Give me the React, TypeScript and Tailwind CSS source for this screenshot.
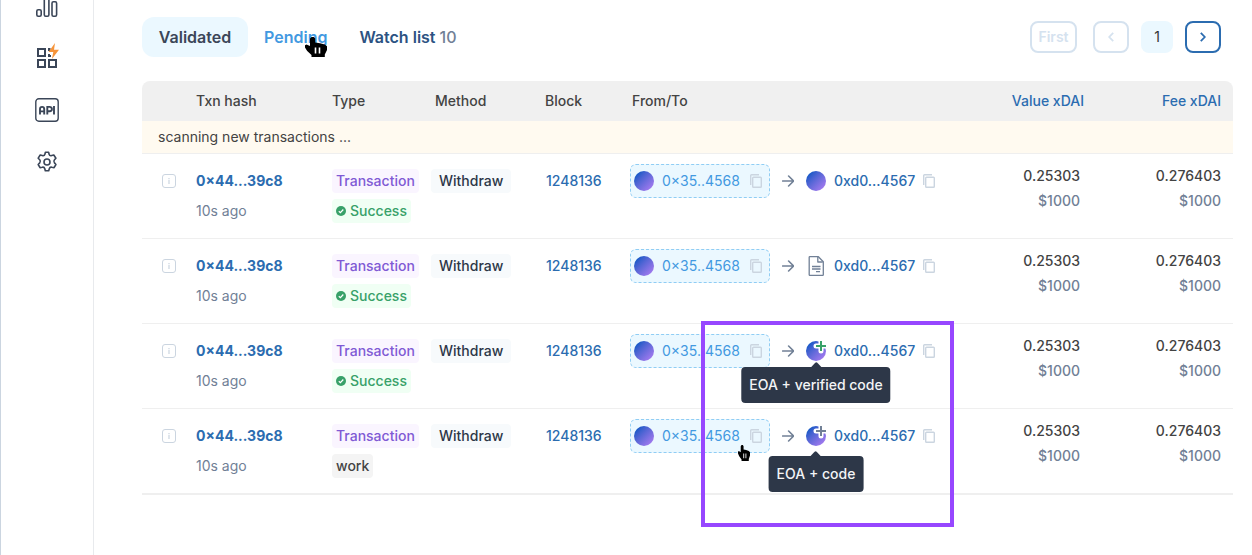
import React from "react";
import clsx from "clsx";

interface Txn {
    id: number;
    status: "success" | "work";
    target: "eoa" | "contract" | "verified" | "code";
    tooltip?: string;
}

const txns: Txn[] = [
    { id: 1, status: "success", target: "eoa" },
    { id: 2, status: "success", target: "contract" },
    { id: 3, status: "success", target: "verified", tooltip: "EOA + verified code" },
    { id: 4, status: "work", target: "code", tooltip: "EOA + code" },
];

function StatsIcon() {
    return (
        <svg width="24" height="18" viewBox="0 0 24 18" fill="none" stroke="#3b4658" strokeWidth="1.6">
            <rect x="1.8" y="9.8" width="4.4" height="6.4" rx="1.4" />
            <rect x="9.3" y="-4" width="4.6" height="20.2" rx="1.4" />
            <rect x="17" y="1.8" width="4.6" height="14.4" rx="1.4" />
        </svg>
    );
}

function AppsIcon() {
    return (
        <svg width="24" height="27" viewBox="0 0 24 27" fill="none">
            <g stroke="#3b4658" strokeWidth="2">
                <rect x="3" y="7" width="7" height="7" />
                <rect x="3" y="18" width="7" height="7" />
                <rect x="14" y="18" width="7" height="7" />
                <path d="M15.5 7H14v2M14 12v2h2" />
            </g>
            <path d="M20 1l-6.5 9h4.8l-1.4 7L24 7.8h-5z" fill="#f6943a" />
        </svg>
    );
}

function ApiIcon() {
    return (
        <svg width="24" height="24" viewBox="0 0 24 24" fill="none" stroke="#3b4658">
            <rect x="0.8" y="0.8" width="22.4" height="22.4" rx="3" strokeWidth="1.4" />
            <path d="M5 16.5V11a2.1 2.1 0 0 1 4.2 0v5.5M5 13.4h4.2M12.3 16.5V8.9h2.4a2.1 2.1 0 0 1 0 4.4h-2.4M19 8v8.5" strokeWidth="1.9" />
        </svg>
    );
}

function GearIcon() {
    return (
        <svg width="24" height="24" viewBox="0 0 24 24" fill="none" stroke="#3b4658" strokeWidth="1.6" strokeLinejoin="round">
            <circle cx="12" cy="12" r="3" />
            <path d="M9.9 4.2 10.4 2.2h3.2l.5 2c.3 1.1 1.5 1.7 2.6 1.4l2.1-.6 2.1 3.2-1.4 1.6c-.8.9-.8 2.2 0 3.1l1.4 1.6-1.8 3.2-2.2-.5c-1.1-.3-2.3.4-2.6 1.5l-.6 2.1h-3.4l-.5-2.1c-.3-1.1-1.5-1.8-2.6-1.5l-2.2.5-1.8-3.2 1.5-1.6c.8-.9.8-2.2 0-3.1L3.2 8.2 5.2 5l2.1.6c1.1.3 2.3-.3 2.6-1.4z" />
        </svg>
    );
}

function CopyIcon() {
    return (
        <svg width="12" height="14" viewBox="0 0 12 14" fill="none" stroke="#cbd5e0" strokeWidth="1.4">
            <rect x="2.7" y="3.2" width="8.6" height="10.1" rx="0.8" />
            <path d="M0.7 11V1.5a.8.8 0 0 1 .8-.8H9" />
        </svg>
    );
}

function ArrowIcon() {
    return (
        <svg className="mx-3 shrink-0" width="12" height="12" viewBox="0 0 12 12" fill="none" stroke="#718096" strokeWidth="1.6" strokeLinecap="round" strokeLinejoin="round">
            <path d="M.6 6h10.8M6.6 1l5 5-5 5" />
        </svg>
    );
}

function ContractIcon() {
    return (
        <svg width="20" height="20" viewBox="0 0 20 20" fill="none" stroke="#718096" strokeWidth="1.3" strokeLinejoin="round">
            <path d="M3.8.7h8.6l4.9 5v13a.7.7 0 0 1-.7.7H3.9a.7.7 0 0 1-.7-.7V1.3a.6.6 0 0 1 .6-.6z" />
            <path d="M11.8 1v5h5M6 10.5h8.5M6 13h8.5M10 15.6h4" />
        </svg>
    );
}

function Avatar({ plus }: { plus?: string }) {
    return (
        <span className="relative block size-5">
            <span className="block size-5 rounded-full bg-linear-135 from-[#1259c7] from-15% to-[#a57af0] to-90%" />
            {plus && (
                <svg className="absolute top-0 left-0" width="20" height="20" viewBox="0 0 20 20" fill="none">
                    <path d="M15 0v10M10 5h10" stroke="#fff" strokeWidth="5" strokeLinecap="round" />
                    <path d="M15 0v10M10 5h10" stroke={plus} strokeWidth="2" />
                </svg>
            )}
        </span>
    );
}

function HandCursor({ className }: { className: string }) {
    return (
        <svg className={clsx("pointer-events-none absolute z-20", className)} viewBox="0 0 22 20" preserveAspectRatio="none">
            <path d="M6.5 0h2.4l1.3 1.5v4l4.8.7 4.8 1.3 2.2 1.7v3.8l-2.2 4.5V20H6.5v-2L2.2 14 0 10.5V8.3l1.5-.8 3.5 1.5V1.5z" />
            <path d="M10.5 10.5v6M14.5 10.5v6" stroke="#fff" strokeWidth="1.6" />
        </svg>
    );
}

function TargetIcon({ txn }: { txn: Txn }) {
    return (
        <span className="relative shrink-0">
            {txn.target === "contract" && <ContractIcon />}
            {txn.target === "eoa" && <Avatar />}
            {txn.target === "verified" && <Avatar plus="#38a169" />}
            {txn.target === "code" && <Avatar plus="#718096" />}
            {txn.tooltip && (
                <span
                    role="tooltip"
                    className={clsx(
                        "absolute left-1/2 z-10 -translate-x-1/2 rounded bg-[#2d3748] px-2 py-2 leading-5 font-medium whitespace-nowrap text-[#f3f4f6]",
                        txn.target === "verified" ? "top-[26px]" : "top-[30px]"
                    )}
                >
                    <svg className="absolute -top-[5px] left-1/2 -translate-x-1/2" width="12" height="6" viewBox="0 0 12 6" fill="#2d3748">
                        <path d="M0 6 5 .7q1-1 2 0L12 6z" />
                    </svg>
                    {txn.tooltip}
                </span>
            )}
        </span>
    );
}

function TxnRow({ txn, last }: { txn: Txn; last: boolean }) {
    const cell = clsx("border-[#efefef] p-0 align-top", last ? "border-b-2" : "border-b");

    return (
        <tr className={last ? "h-[86px]" : "h-[85px]"}>
            <td className={clsx(cell, "pl-5")}>
                <button aria-label="Transaction info" className="mt-5 flex size-[14px] items-center justify-center rounded-[3px] border border-[#cbd5e0]">
                    <svg width="2" height="6" viewBox="0 0 2 6" fill="#cbd5e0">
                        <path d="M.4 0h1.2v1.2H.4zM.4 2h1.2v4H.4z" />
                    </svg>
                </button>
            </td>
            <td className={cell}>
                <a href="#txn" className="mt-[15px] block leading-6 font-bold text-[#2b6cb0]">0×44...39c8</a>
                <p className="mt-[6px] leading-6 text-[#718096]">10s ago</p>
            </td>
            <td className={cell}>
                <div className="mt-[15px] flex flex-col items-start gap-[6px] leading-6 font-medium">
                    <span className="rounded bg-[#faf5ff] px-1 text-[#805ad5]">Transaction</span>
                    {txn.status === "success" ? (
                        <span className="flex items-center gap-1 rounded bg-[#f0fff4] px-1 text-[#38a169]">
                            <svg width="10" height="10" viewBox="0 0 10 10" fill="none">
                                <circle cx="5" cy="5" r="5" fill="#38a169" />
                                <path d="M2.8 5.2l1.6 1.5 2.9-3.2" stroke="#fff" strokeWidth="1.2" />
                            </svg>
                            Success
                        </span>
                    ) : (
                        <span className="rounded bg-[#f4f4f4] px-1 text-[#434343]">work</span>
                    )}
                </div>
            </td>
            <td className={cell}>
                <span className="mt-[15px] inline-block rounded bg-[#f7fafc] px-2 leading-6 font-medium text-[#2d3748]">Withdraw</span>
            </td>
            <td className={clsx(cell, "pl-px")}>
                <a href="#block" className="mt-[15px] block leading-6 font-medium text-[#2b6cb0]">1248136</a>
            </td>
            <td className={cell}>
                <div className="mt-[10px] flex items-center leading-6">
                    <div className="relative flex h-[34px] w-[140px] shrink-0 items-center rounded-md border border-dashed border-[#90cdf4] bg-[#ebf8ff] pl-[3px]">
                        <Avatar />
                        <a href="#from" className="ml-2 text-[#4299e1]">0×35..4568</a>
                        <button aria-label="Copy sender" className="mr-[7px] ml-auto"><CopyIcon /></button>
                        {last && <HandCursor className="top-[25px] left-[107px] h-4 w-3" />}
                    </div>
                    <ArrowIcon />
                    <TargetIcon txn={txn} />
                    <a href="#to" className="ml-2 font-medium text-[#2b6cb0]">0xd0...4567</a>
                    <button aria-label="Copy recipient" className="ml-2"><CopyIcon /></button>
                </div>
            </td>
            <td className={clsx(cell, "pr-4 text-right leading-[25px] font-medium")}>
                <p className="mt-[9px] text-[#434343]">0.25303</p>
                <p className="text-[#718096]">$1000</p>
            </td>
            <td className={clsx(cell, "pr-3 text-right leading-[25px] font-medium")}>
                <p className="mt-[9px] text-[#434343]">0.276403</p>
                <p className="text-[#718096]">$1000</p>
            </td>
        </tr>
    );
}

export default function App() {
    return (
        <div className="flex min-h-screen border-l border-[#cbd5e0] bg-white font-['Inter',sans-serif] text-sm">
            <aside className="w-[93px] shrink-0 border-r border-[#e8eaed]">
                <nav className="flex flex-col items-center">
                    <a href="#stats" aria-label="Stats"><StatsIcon /></a>
                    <a href="#apps" aria-label="Apps" className="mt-6"><AppsIcon /></a>
                    <a href="#api" aria-label="API" className="mt-[29px]"><ApiIcon /></a>
                    <a href="#settings" aria-label="Settings" className="mt-7"><GearIcon /></a>
                </nav>
            </aside>

            <main className="min-w-0 flex-1 pt-[17px] pr-[19px] pl-12">
                <div className="flex items-center justify-between pr-3">
                    <div className="flex text-base leading-6 font-semibold">
                        <button className="w-[106px] rounded-xl bg-[#ebf8ff] py-2 text-center text-[#3b4658]">Validated</button>
                        <button className="relative px-4 py-2 text-[#4299e1]">
                            Pending
                            <HandCursor className="top-5 left-[57px] h-5 w-[22px]" />
                        </button>
                        <button className="px-4 py-2 text-[#2c5282]">
                            Watch list <span className="font-medium text-[#718096]">10</span>
                        </button>
                    </div>

                    <div className="flex items-center font-semibold">
                        <button disabled className="h-8 w-[47px] rounded-lg border-2 border-[#d5e2ef] text-center text-[#d5e2ef]">First</button>
                        <button disabled aria-label="Previous page" className="ml-4 flex h-8 w-9 items-center justify-center rounded-lg border-2 border-[#d5e2ef]">
                            <svg width="6" height="10" viewBox="0 0 6 10" fill="none" stroke="#d5e2ef" strokeWidth="1.8">
                                <path d="M5.2.8 1.2 5l4 4.2" />
                            </svg>
                        </button>
                        <span className="ml-3 flex size-8 items-center justify-center rounded-lg bg-[#ebf8ff] font-normal text-[#333]">1</span>
                        <button aria-label="Next page" className="ml-3 flex h-8 w-9 items-center justify-center rounded-lg border-2 border-[#2b6cb0]">
                            <svg width="6" height="10" viewBox="0 0 6 10" fill="none" stroke="#2b6cb0" strokeWidth="1.8">
                                <path d="M.8.8l4 4.2-4 4.2" />
                            </svg>
                        </button>
                    </div>
                </div>

                <div className="relative mt-6">
                    <table className="w-full table-fixed border-separate border-spacing-0">
                        <colgroup>
                            <col className="w-[54px]" />
                            <col className="w-[136px]" />
                            <col className="w-[99px]" />
                            <col className="w-[114px]" />
                            <col className="w-[85px]" />
                            <col />
                            <col className="w-[130px]" />
                            <col className="w-[137px]" />
                        </colgroup>
                        <thead>
                            <tr className="h-10 text-left text-[#434343] [&>th]:bg-[#f0f0f0] [&>th]:font-medium">
                                <th className="rounded-tl-lg" />
                                <th>Txn hash</th>
                                <th>Type</th>
                                <th className="pl-1">Method</th>
                                <th>Block</th>
                                <th className="pl-[2px]">From/To</th>
                                <th className="pr-3 text-right text-[#2b6cb0]">Value xDAI</th>
                                <th className="rounded-tr-lg pr-3 text-right text-[#2b6cb0]">Fee xDAI</th>
                            </tr>
                        </thead>
                        <tbody>
                            <tr className="h-[33px]">
                                <td colSpan={8} className="border-b border-[#efefef] bg-[#fffaf0] px-4 text-[#434343]">
                                    scanning new transactions ...
                                </td>
                            </tr>
                            {txns.map((txn, i) => (
                                <TxnRow key={txn.id} txn={txn} last={i === txns.length - 1} />
                            ))}
                        </tbody>
                    </table>

                    {/* highlighted area around the address tooltips */}
                    <div className="pointer-events-none absolute top-[240px] left-[559px] h-[206px] w-[253px] border-4 border-[#9747ff]" />
                </div>
            </main>
        </div>
    );
}
